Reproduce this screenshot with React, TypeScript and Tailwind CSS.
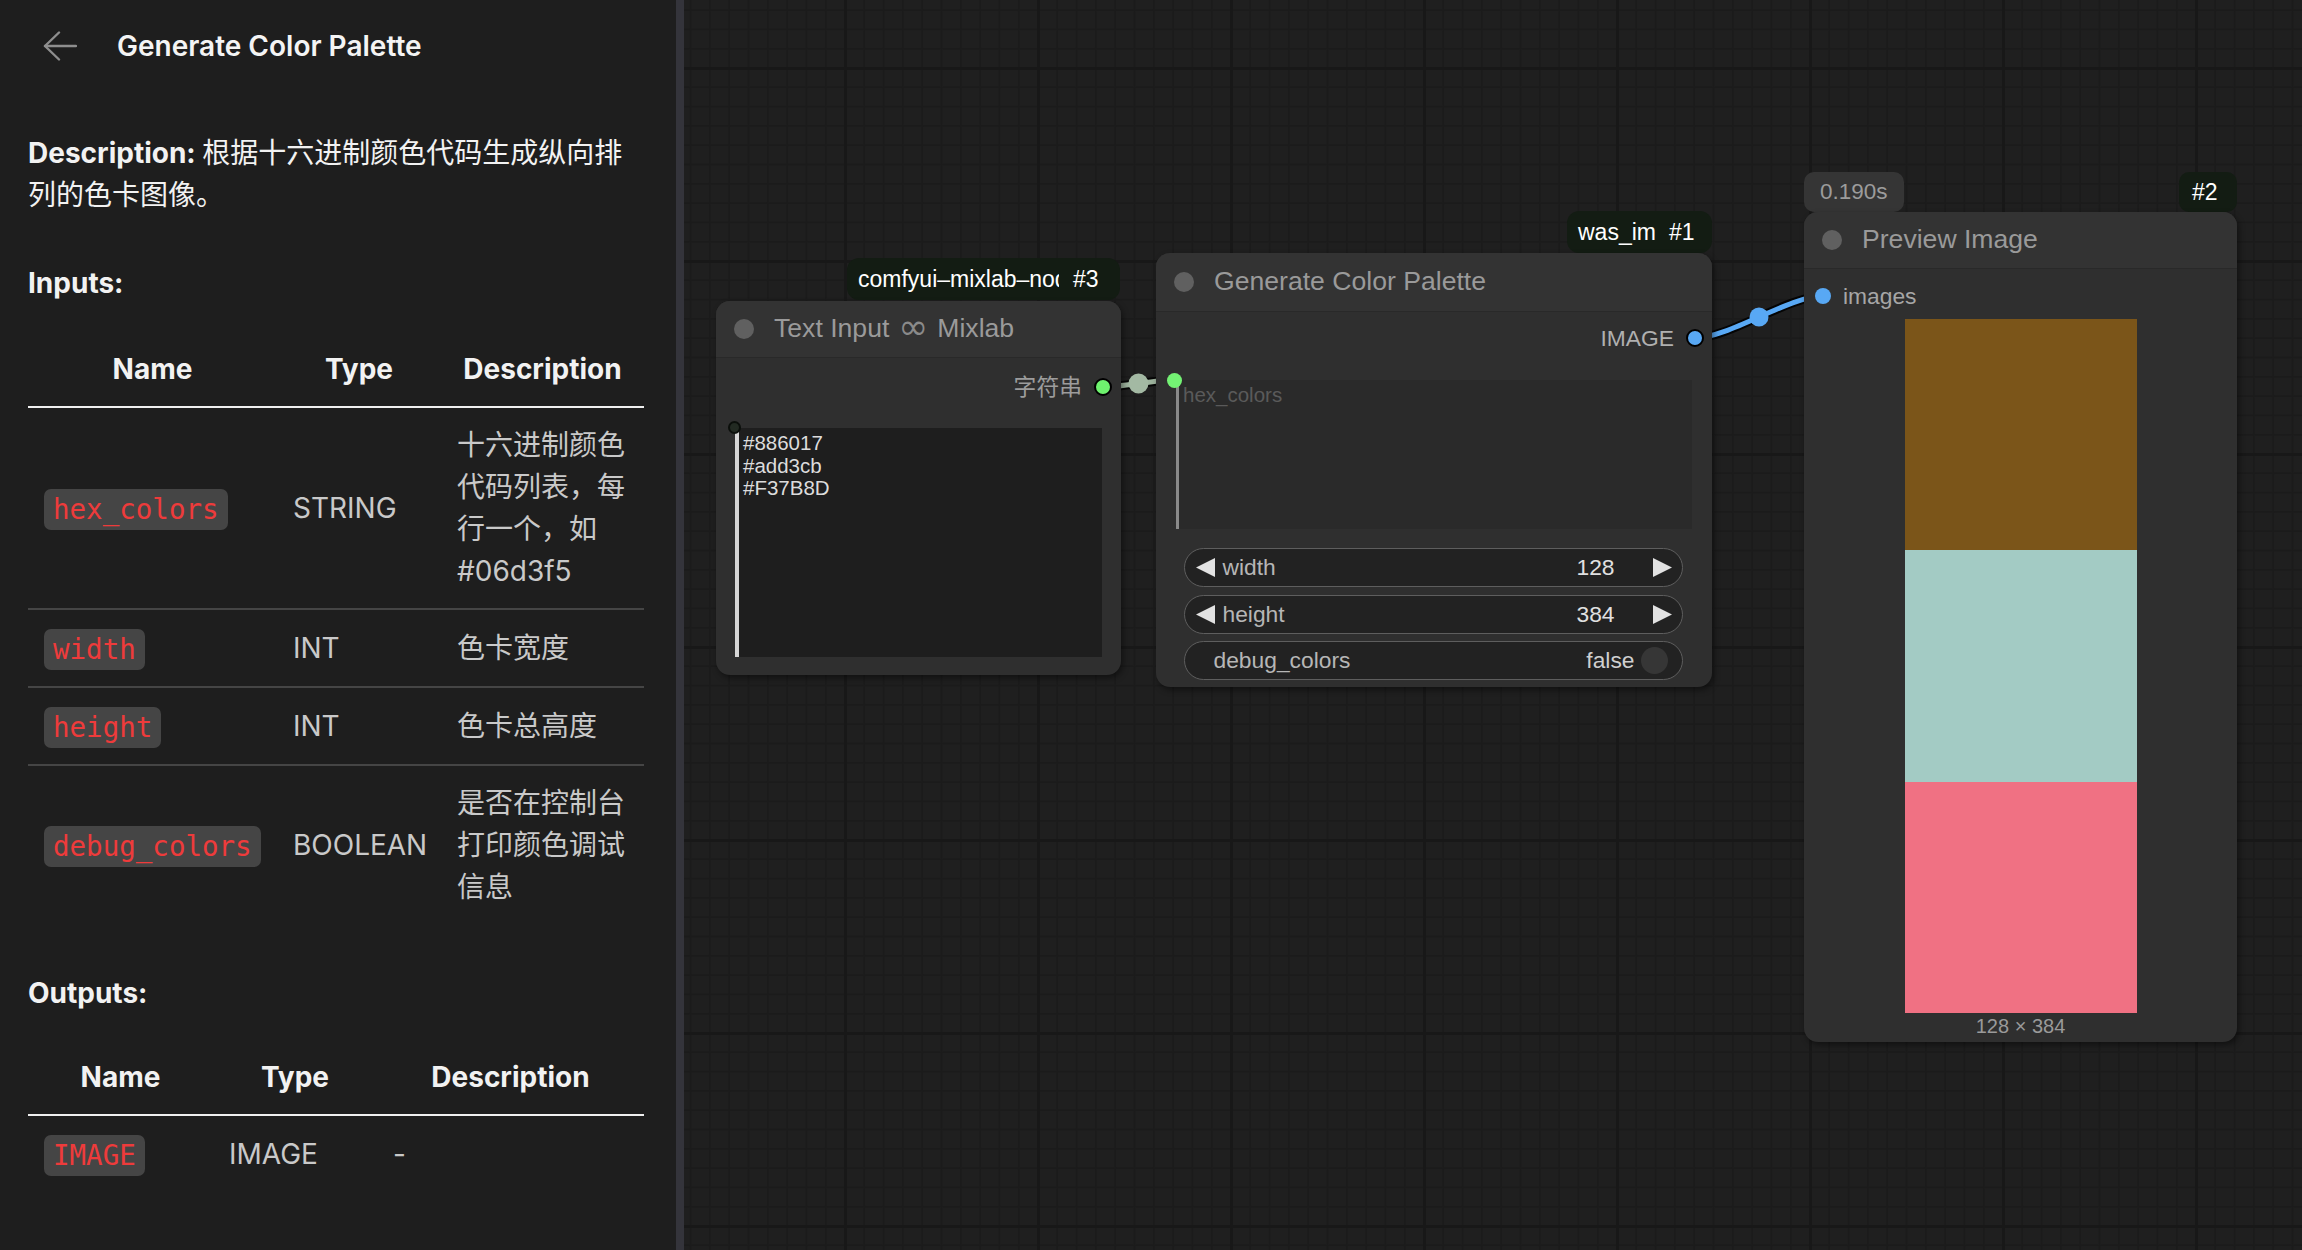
import React from "react";

function BackArrow() {
  return (
    <svg width="34" height="30" viewBox="0 0 34 30" fill="none" stroke="#8e8e8e" strokeWidth="2.4" strokeLinecap="round" strokeLinejoin="round">
      <path d="M2 15H33" />
      <path d="M16 1.5L2 15L16 28.5" />
    </svg>
  );
}

function Tag({ children }: { children: React.ReactNode }) {
  return (
    <span className="inline-block align-middle rounded-[7px] bg-[#454545] px-[9px] py-[4px] font-['DejaVu_Sans_Mono',monospace] text-[27.5px] leading-[33px] text-[#ee3b3b]">
      {children}
    </span>
  );
}

function TriLeft() {
  return (
    <svg width="19" height="19" viewBox="0 0 19 19" className="shrink-0">
      <polygon points="0,9.5 19,0 19,19" fill="#e2e2e2" />
    </svg>
  );
}

function TriRight() {
  return (
    <svg width="19" height="19" viewBox="0 0 19 19" className="shrink-0">
      <polygon points="19,9.5 0,0 0,19" fill="#e2e2e2" />
    </svg>
  );
}

function NumberWidget({ label, value, first }: { label: string; value: string; first?: boolean }) {
  return (
    <div className={(first ? "" : "mt-[8px] ") + "h-[39px] rounded-full border-[1.5px] border-[#5e5e5e] bg-[#222222] flex items-center pl-[10.5px] pr-[10.5px] text-[22.8px]"}>
      <TriLeft />
      <span className="ml-[8px] text-[#b6b6b6]">{label}</span>
      <span className="ml-auto text-[#e0e0e0]">{value}</span>
      <span className="ml-[38px] flex">
        <TriRight />
      </span>
    </div>
  );
}

const cellBody = "px-4 py-4 align-middle text-[#c9c9c9] leading-[42px]";

function Sidebar() {
  return (
    <aside className="w-[676px] shrink-0 h-full overflow-hidden bg-[#1e1e1e] pl-[28px] pr-[32px] font-[Inter,'Noto_Sans_CJK_SC',sans-serif] text-[28px] text-[#f2f2f2]">
      <div className="flex items-center h-[92px] pl-[15px]">
        <BackArrow />
        <h1 className="ml-[40px] text-[28px] font-semibold text-[#f4f4f4]">Generate Color Palette</h1>
      </div>
      <p className="mt-[40px] leading-[42px]">
        <span className="font-bold">Description: </span>根据十六进制颜色代码生成纵向排列的色卡图像。
      </p>
      <h2 className="mt-[46px] font-bold leading-[42px]">Inputs:</h2>
      <table className="mt-[28px] w-[616px] table-fixed border-collapse">
        <colgroup>
          <col className="w-[249px]" />
          <col className="w-[164px]" />
          <col className="w-[203px]" />
        </colgroup>
        <thead>
          <tr className="border-b-2 border-[#efefef]">
            <th className="px-4 py-4 font-bold text-center leading-[42px]">Name</th>
            <th className="px-4 py-4 font-bold text-center leading-[42px]">Type</th>
            <th className="px-4 py-4 font-bold text-center leading-[42px]">Description</th>
          </tr>
        </thead>
        <tbody>
          <tr className="border-b-2 border-[#454545]">
            <td className={cellBody}><Tag>hex_colors</Tag></td>
            <td className={cellBody}>STRING</td>
            <td className={cellBody}>十六进制颜色代码列表，每行一个，如 #06d3f5</td>
          </tr>
          <tr className="border-b-2 border-[#454545]">
            <td className={cellBody}><Tag>width</Tag></td>
            <td className={cellBody}>INT</td>
            <td className={cellBody}>色卡宽度</td>
          </tr>
          <tr className="border-b-2 border-[#454545]">
            <td className={cellBody}><Tag>height</Tag></td>
            <td className={cellBody}>INT</td>
            <td className={cellBody}>色卡总高度</td>
          </tr>
          <tr>
            <td className={cellBody}><Tag>debug_colors</Tag></td>
            <td className={cellBody}>BOOLEAN</td>
            <td className={cellBody}>是否在控制台打印颜色调试信息</td>
          </tr>
        </tbody>
      </table>
      <h2 className="mt-[48px] font-bold leading-[42px]">Outputs:</h2>
      <table className="mt-[26px] w-[616px] table-fixed border-collapse">
        <colgroup>
          <col className="w-[185px]" />
          <col className="w-[164px]" />
          <col className="w-[267px]" />
        </colgroup>
        <thead>
          <tr className="border-b-2 border-[#efefef]">
            <th className="px-4 py-4 font-bold text-center leading-[42px]">Name</th>
            <th className="px-4 py-4 font-bold text-center leading-[42px]">Type</th>
            <th className="px-4 py-4 font-bold text-center leading-[42px]">Description</th>
          </tr>
        </thead>
        <tbody>
          <tr>
            <td className={cellBody}><Tag>IMAGE</Tag></td>
            <td className={cellBody}>IMAGE</td>
            <td className={cellBody}>-</td>
          </tr>
        </tbody>
      </table>
    </aside>
  );
}

function Grid() {
  const minors = Array.from({ length: 10 }, (_, i) => i * 19.3);
  return (
    <svg className="absolute inset-0 w-full h-full" aria-hidden="true">
      <defs>
        <pattern id="cgrid" x="160" y="67" width="193" height="193" patternUnits="userSpaceOnUse">
          {minors.map((p) => (
            <rect key={"v" + p} x={p} y={0} width={2} height={193} fill="#1b1b1b" />
          ))}
          {minors.map((p) => (
            <rect key={"h" + p} x={0} y={p} width={193} height={2} fill="#1b1b1b" />
          ))}
          <rect x={0} y={0} width={3} height={193} fill="#181818" />
          <rect x={0} y={0} width={193} height={3} fill="#181818" />
        </pattern>
      </defs>
      <rect width="100%" height="100%" fill="url(#cgrid)" />
    </svg>
  );
}

function Links() {
  return (
    <svg className="absolute inset-0 w-full h-full" aria-hidden="true">
      <path d="M419 387 C437 387 472 380 490 380" stroke="#000" strokeOpacity="0.85" strokeWidth="9" fill="none" />
      <path d="M419 387 C437 387 472 380 490 380" stroke="#9db39d" strokeWidth="5" fill="none" />
      <circle cx="454.5" cy="383.5" r="10" fill="#a3b9a3" />
      <path d="M1011 338 C1045 338 1105 296 1139 296" stroke="#000" strokeOpacity="0.85" strokeWidth="9" fill="none" />
      <path d="M1011 338 C1045 338 1105 296 1139 296" stroke="#58a8f4" strokeWidth="5" fill="none" />
      <circle cx="1075" cy="317" r="9.5" fill="#58a8f4" />
    </svg>
  );
}

const nodeBody = "absolute rounded-[14px] bg-[#2f2f2f] shadow-[2px_3px_6px_rgba(0,0,0,0.45)] flex flex-col";
const titleBar = "shrink-0 flex items-center rounded-t-[14px] bg-[#333333] border-b border-[#292929] pl-[18px]";
const titleText = "ml-[20px] text-[26.6px] text-[#9a9a9a] whitespace-nowrap";

function Canvas() {
  return (
    <div className="relative flex-1 h-full overflow-hidden bg-[#1f1f1f] font-['Liberation_Sans','Noto_Sans_CJK_SC',sans-serif]">
      <Grid />
      <Links />

      {/* Node #3 : Text Input Mixlab */}
      <div className="absolute left-[163px] top-[258px] w-[273px] h-[42px] rounded-[12px] bg-[#131c13] flex items-center pl-[11px] text-[23px] text-white whitespace-nowrap">
        <span className="w-[201px] overflow-hidden">comfyui–mixlab–nodes</span>
        <span className="ml-[14px]">#3</span>
      </div>
      <div className={nodeBody + " left-[32px] top-[301px] w-[405px] h-[374px]"}>
        <div className={titleBar + " h-[57px]"}>
          <span className="w-[20px] h-[20px] rounded-full bg-[#606060]" />
          <span className={titleText + " flex items-center"}>
            <span>Text Input</span>
            <span className="mx-[9px] -mt-[3px] font-['DejaVu_Sans',sans-serif] text-[36px] leading-none text-[#8a8a8a]">∞</span>
            <span>Mixlab</span>
          </span>
        </div>
        <div className="mt-[14px] h-[30px] flex items-center justify-end pr-[9px]">
          <span className="text-[22.8px] text-[#9c9c9c]">字符串</span>
          <span className="ml-[12px] w-[18px] h-[18px] rounded-full bg-[#6ef26e] border-2 border-black" />
        </div>
        <div className="relative mt-[26px] mx-[19px] h-[229px] bg-[#1e1e1e] border-l-4 border-[#d6d6d6] pl-[4px] pt-[4px] text-[20.5px] leading-[22.5px] text-[#dcdcdc]">
          <div>#886017</div>
          <div>#add3cb</div>
          <div>#F37B8D</div>
          <span className="absolute left-[-11.5px] top-[-7.5px] w-[13px] h-[13px] rounded-full border-2 border-[#0b0f0b] bg-[#222a22]" />
        </div>
      </div>

      {/* Node #1 : Generate Color Palette */}
      <div className="absolute left-[883px] top-[211px] w-[145px] h-[42px] rounded-[12px] bg-[#131c13] flex items-center pl-[11px] text-[23px] text-white whitespace-nowrap">
        <span>was_im</span>
        <span className="ml-[13px]">#1</span>
      </div>
      <div className={nodeBody + " left-[472px] top-[253px] w-[556px] h-[434px]"}>
        <div className={titleBar + " h-[59px]"}>
          <span className="w-[20px] h-[20px] rounded-full bg-[#606060]" />
          <span className={titleText}>Generate Color Palette</span>
        </div>
        <div className="mt-[11px] h-[30px] flex items-center justify-end pr-[8px]">
          <span className="text-[22.8px] text-[#b0b0b0]">IMAGE</span>
          <span className="ml-[12px] w-[18px] h-[18px] rounded-full bg-[#58a8f4] border-2 border-black" />
        </div>
        <div className="relative mt-[27px] mx-[20px] h-[149px] bg-[#2a2a2a] border-l-[3px] border-[#8a8a8a] pl-[4px] pt-[4px] text-[20.5px] leading-[22.5px] text-[#5a5a5a]">
          hex_colors
          <span className="absolute left-[-12.5px] top-[-7.5px] w-[15px] h-[15px] rounded-full bg-[#74f274]" />
        </div>
        <div className="mt-[19px] ml-[28px] mr-[29px] flex flex-col">
          <NumberWidget label="width" value="128" first />
          <NumberWidget label="height" value="384" />
          <div className="mt-[7px] h-[39px] rounded-full border-[1.5px] border-[#5e5e5e] bg-[#222222] flex items-center pl-[28.5px] pr-[14px] text-[22.8px]">
            <span className="text-[#b6b6b6]">debug_colors</span>
            <span className="ml-auto text-[#cfcfcf]">false</span>
            <span className="ml-[6.5px] w-[27px] h-[27px] rounded-full bg-[#363636]" />
          </div>
        </div>
      </div>

      {/* Node #2 : Preview Image */}
      <div className="absolute left-[1120px] top-[172px] w-[100px] h-[40px] rounded-[10px] bg-[#353535] flex items-center pl-[16px] text-[22.5px] text-[#9c9c9c]">
        0.190s
      </div>
      <div className="absolute left-[1495px] top-[172px] w-[58px] h-[40px] rounded-[10px] bg-[#131c13] flex items-center pl-[13px] text-[23px] text-white">
        #2
      </div>
      <div className={nodeBody + " left-[1120px] top-[212px] w-[433px] h-[830px]"}>
        <div className={titleBar + " h-[57px]"}>
          <span className="w-[20px] h-[20px] rounded-full bg-[#606060]" />
          <span className={titleText}>Preview Image</span>
        </div>
        <div className="mt-[12px] h-[30px] flex items-center pl-[11px]">
          <span className="w-[16px] h-[16px] rounded-full bg-[#58a8f4]" />
          <span className="ml-[12px] text-[22.8px] text-[#a6a6a6]">images</span>
        </div>
        <div className="mt-[8px] mx-auto w-[232px] h-[694px] flex flex-col">
          <div className="flex-1 bg-[#7b5519]" />
          <div className="flex-1 bg-[#a3cbc4]" />
          <div className="flex-1 bg-[#f07183]" />
        </div>
        <div className="h-[26px] leading-[26px] text-center text-[20px] text-[#9a9a9a]">128 × 384</div>
      </div>
    </div>
  );
}

export default function App() {
  return (
    <div className="flex w-[2302px] h-[1250px] overflow-hidden bg-[#1e1e1e]">
      <Sidebar />
      <div className="w-[8px] shrink-0 h-full bg-[#34343b]" />
      <Canvas />
    </div>
  );
}
